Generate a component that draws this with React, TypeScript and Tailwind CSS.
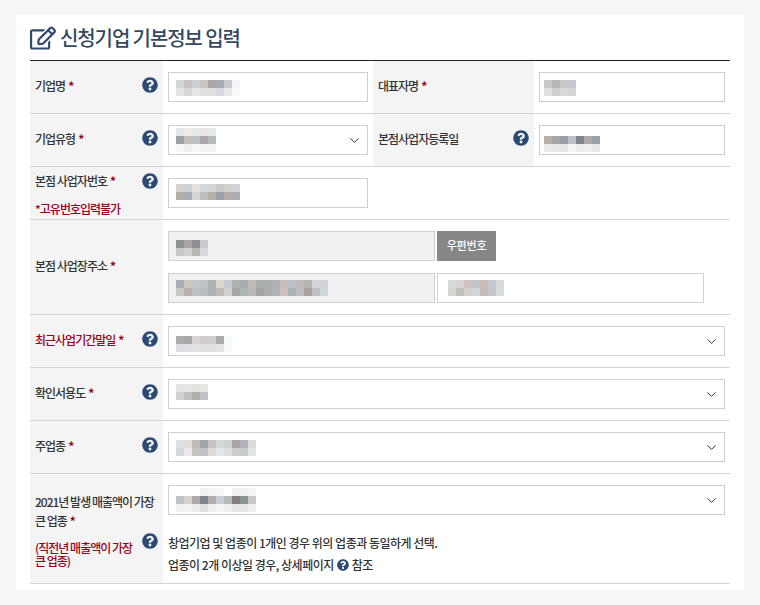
import type { ReactNode } from "react";
import { ChevronDown } from "lucide-react";
import { FaQuestionCircle, FaRegEdit } from "react-icons/fa";

const FONT = "font-['Noto_Sans_CJK_KR','Noto_Sans',sans-serif]";

// blurred values in the form, drawn as rows of 8px cells
const M = {
  name: [
    ["#d3d5d7", "#c9c4c2", "#cdd0d3", "#c9c6c2", "#aaa7a6", "#a9abb4", "#c9cccb", "#f3f5f9"],
    ["#e2e3e5", "#d8d7d8", "#e5e5e8", "#e0dfe2", "#e0dfe1", "#d8d9de", "#e6eae8", "#f8f9fb"],
  ],
  type: [
    ["#e4e6ea", "#eeece8", "#e6e8eb", "#e9e6e6", "#e6e9ec"],
    ["#9da0a6", "#c4bfbb", "#bcc1c6", "#aaa7a8", "#b5bbbe"],
    ["#f6f6f6", "#f0efec", "#f5f6f8", "#f2f2f2", "#f0f2f5"],
  ],
  bizNo: [
    ["#d5d1ce", "#ccd2d7", "#e5e1de", "#d3d8dc", "#d7d4d4", "#cbcbcc", "#d3d1cf", "#cfd3d6"],
    ["#b3aea6", "#a8adb4", "#d3d5d5", "#bebdbe", "#b6aea9", "#9a9fa8", "#b5aca8", "#a8adb1"],
  ],
  rep: [
    ["#c9c7c9", "#b9b6b3", "#c6c8ca", "#c5c8cc"],
    ["#dfdfdf", "#cfcfce", "#d8dadb", "#d3d5d7"],
  ],
  date: [
    ["#b6aeab", "#a5a8a4", "#9a9ea6", "#bcc0c2", "#82858c", "#b0a8a6", "#9ba1a8"],
    ["#eaeaec", "#e8e8ea", "#e6e6e8", "#f5f5f6", "#ececee", "#eeeeef", "#e8e8ea"],
  ],
  zip: [
    ["#8f9094", "#a9a7a5", "#8b8e93", "#c9cbce"],
    ["#c9c9c9", "#cfd0d2", "#b9b8b5", "#d9dadb"],
  ],
  addr: [
    ["#a8adb6", "#cdc8c0", "#c4c8cc", "#bcc3c6", "#aeb2b2", "#dcd8d0", "#c6cad2", "#adb1af", "#a6adaf", "#bdbbb5", "#adadb0", "#aaadad", "#adb1b1", "#c8bdb9", "#b9c0c8", "#bdbcb8", "#b5b6b0", "#d3d4d6", "#d1d3d6"],
    ["#cac8c6", "#b8b4ad", "#bcc1c6", "#b8bcbd", "#a9b2b6", "#bfbab6", "#cfd0d2", "#a6a7a3", "#abb4b7", "#b8b9b8", "#a5a5a5", "#aeaca8", "#afb6ba", "#cbc0bb", "#aab2b6", "#bcbfc0", "#a9a59e", "#bdbfc2", "#cfd6d8"],
  ],
  addr2: [
    ["#d7dbdc", "#d5d5d5", "#cfc4c2", "#bfc6cd", "#c9bdb8", "#c4c8cf", "#d8dadc"],
    ["#d6d6d3", "#bfc1c1", "#d4cfcb", "#d3d7dc", "#c4bcb7", "#c5c8ca", "#d9dcdf"],
  ],
  period: [
    ["#aeacac", "#aaa9a9", "#d6d6d4", "#cfcbc8", "#d0cfcd", "#aeaaa9", "#f8fbfd"],
    ["#dcdce2", "#dfdee3", "#e2e2e5", "#dfdfe2", "#e0dfe2", "#e3e2e4", "#f8fafc"],
  ],
  use: [
    ["#e3e3e3", "#e5e5e5", "#e2e2df", "#e7e5e2"],
    ["#cfd0d2", "#c0c0c2", "#aeaeab", "#bfc3c8"],
  ],
  main: [
    ["#dbe0e4", "#e2ddd8", "#bfbab8", "#a2a5ab", "#c8c2c0", "#d5dad8", "#cfd2d0", "#aaa4a2", "#adb3b8", "#dcdcdc"],
    ["#d4d8dc", "#ebebee", "#c5c3c1", "#bfc3c3", "#dedbd7", "#e3e6ea", "#dddcde", "#d0cbc8", "#c6cbce", "#e2e3e4"],
  ],
  sales: [
    ["#ffffff", "#ffffff", "#ffffff", "#f0f0f2", "#f4f4f4", "#f6f6f6", "#ffffff", "#f0f0f2", "#eff0f0", "#f4f4f4"],
    ["#bcc2c6", "#d5d3d0", "#aeaaa8", "#7f858b", "#b3aeac", "#c5ced3", "#b9bcb6", "#85807f", "#8d9498", "#c9c9c9"],
    ["#f0f0f1", "#f2f2f2", "#ececec", "#dfe0e1", "#eeeeee", "#f4f4f4", "#eeeeee", "#e6e4e4", "#e4e6e8", "#eeeeee"],
  ],
};

function Mosaic({ rows, pad }: { rows: string[][]; pad: string }) {
  return (
    <div className={`flex flex-col ${pad}`}>
      {rows.map((row, i) => (
        <div key={i} className="flex">
          {row.map((c, j) => (
            <span key={j} className="w-2 h-2 block" style={{ background: c }} />
          ))}
        </div>
      ))}
    </div>
  );
}

function Help({ className = "" }: { className?: string }) {
  return <FaQuestionCircle size={16} className={`shrink-0 text-[#2b4a73] ${className}`} />;
}

function Star() {
  return <span className="ml-[3px] text-[#98001a] font-bold">*</span>;
}

function Field({
  rows,
  pad,
  width,
  grey,
  select,
}: {
  rows: string[][];
  pad: string;
  width: string;
  grey?: boolean;
  select?: boolean;
}) {
  return (
    <div
      className={`h-[30px] shrink-0 border border-[#cfcfd3] flex justify-between ${width} ${
        grey ? "bg-[#f1f1f1]" : "bg-white"
      }`}
    >
      <Mosaic rows={rows} pad={pad} />
      {select && <ChevronDown size={15} strokeWidth={1.6} className="self-center mr-[5px] text-[#333]" />}
    </div>
  );
}

function Label({ children, help }: { children: ReactNode; help?: boolean }) {
  return (
    <div className="h-full bg-[#f4f4f5] px-[5px] pb-[2px] flex items-center justify-between">
      <span>{children}</span>
      {help && <Help className="mb-[2px]" />}
    </div>
  );
}

function Row({ children, height = "h-[53px]" }: { children: ReactNode; height?: string }) {
  return <div className={`flex items-center border-b border-[#d3d3d9] ${height}`}>{children}</div>;
}

function Value({ children }: { children: ReactNode }) {
  return <div className="pl-[5px] flex-1 min-w-0">{children}</div>;
}

export default function App() {
  return (
    <div className={`h-[605px] w-[760px] overflow-hidden bg-[#f6f6f6] pt-[15px] pl-[16px] ${FONT}`}>
      <div className="w-[728px] bg-white px-[14px] pb-[6px] text-[12px] font-medium tracking-[-1px] text-[#333]">
        {/* Title */}
        <div className="h-[45px] flex items-center gap-[4px] text-[#34495f]">
          <FaRegEdit size={26} className="text-[#2f4a6d]" />
          <h2 className="text-[20px] font-medium tracking-[-1.1px]">신청기업 기본정보 입력</h2>
        </div>

        <div className="border-t border-[#222]">
          <Row>
            <div className="w-[133px] h-full shrink-0">
              <Label help>
                기업명
                <Star />
              </Label>
            </div>
            <div className="w-[210px] pl-[5px] shrink-0">
              <Field rows={M.name} pad="pt-[7px] pl-[7px]" width="w-[200px]" />
            </div>
            <div className="w-[161px] h-full shrink-0">
              <Label>
                대표자명
                <Star />
              </Label>
            </div>
            <Value>
              <Field rows={M.rep} pad="pt-[7px] pl-[4px]" width="w-[186px]" />
            </Value>
          </Row>

          <Row>
            <div className="w-[133px] h-full shrink-0">
              <Label help>
                기업유형
                <Star />
              </Label>
            </div>
            <div className="w-[210px] pl-[5px] shrink-0">
              <Field rows={M.type} pad="pt-[2px] pl-[7px]" width="w-[200px]" select />
            </div>
            <div className="w-[161px] h-full shrink-0">
              <Label help>본점사업자등록일</Label>
            </div>
            <Value>
              <Field rows={M.date} pad="pt-[10px] pl-[4px]" width="w-[186px]" />
            </Value>
          </Row>

          <Row>
            <div className="w-[133px] h-full shrink-0 bg-[#f4f4f5] px-[5px] pt-[5px]">
              <div className="flex justify-between items-center">
                <span>
                  본점 사업자번호
                  <Star />
                </span>
                <Help />
              </div>
              <p className="mt-[10px] text-[#98001a]">*고유번호입력불가</p>
            </div>
            <Value>
              <Field rows={M.bizNo} pad="pt-[5px] pl-[7px]" width="w-[200px]" />
            </Value>
          </Row>

          <Row height="h-[95px]">
            <div className="w-[133px] h-full shrink-0">
              <Label>
                본점 사업장주소
                <Star />
              </Label>
            </div>
            <Value>
              <div className="flex flex-col gap-[12px]">
                <div className="flex gap-[2px]">
                  <Field rows={M.zip} pad="pt-[8px] pl-[7px]" width="w-[267px]" grey />
                  <button className="h-[30px] w-[59px] bg-[#868686] pb-[2px] text-[11px] tracking-[-0.2px] text-white">
                    우편번호
                  </button>
                </div>
                <div className="flex gap-[2px]">
                  <Field rows={M.addr} pad="pt-[6px] pl-[7px]" width="w-[267px]" grey />
                  <Field rows={M.addr2} pad="pt-[6px] pl-[10px]" width="w-[267px]" />
                </div>
              </div>
            </Value>
          </Row>

          <Row>
            <div className="w-[133px] h-full shrink-0">
              <Label help>
                <span className="text-[#98001a]">최근사업기간말일</span>
                <Star />
              </Label>
            </div>
            <Value>
              <Field rows={M.period} pad="pt-[9px] pl-[7px]" width="w-[557px]" select />
            </Value>
          </Row>

          <Row>
            <div className="w-[133px] h-full shrink-0">
              <Label help>
                확인서용도
                <Star />
              </Label>
            </div>
            <Value>
              <Field rows={M.use} pad="pt-[4px] pl-[7px]" width="w-[557px]" select />
            </Value>
          </Row>

          <Row>
            <div className="w-[133px] h-full shrink-0">
              <Label help>
                주업종
                <Star />
              </Label>
            </div>
            <Value>
              <Field rows={M.main} pad="pt-[7px] pl-[7px]" width="w-[557px]" select />
            </Value>
          </Row>

          <Row height="h-[110px]">
            <div className="w-[133px] h-full shrink-0 bg-[#f4f4f5] px-[5px] pt-[18px]">
              <p className="leading-[19px]">
                2021년 발생 매출액이 가장 큰 업종
                <Star />
              </p>
              <div className="flex justify-between mt-[11px]">
                <p className="w-[103px] leading-[13px] text-[#98001a]">(직전년 매출액이 가장 큰 업종)</p>
                <Help className="mt-[-8px]" />
              </div>
            </div>
            <div className="pl-[5px] flex-1 h-full pt-[11px] tracking-[-0.5px]">
              <Field rows={M.sales} pad="pt-[2px] pl-[7px]" width="w-[557px]" select />
              <p className="mt-[19px] leading-[18px]">창업기업 및 업종이 1개인 경우 위의 업종과 동일하게 선택.</p>
              <p className="mt-[4px] leading-[18px] flex items-center gap-[3px]">
                업종이 2개 이상일 경우, 상세페이지
                <FaQuestionCircle size={12} className="text-[#2b4a73]" />
                참조
              </p>
            </div>
          </Row>
        </div>
      </div>
    </div>
  );
}
